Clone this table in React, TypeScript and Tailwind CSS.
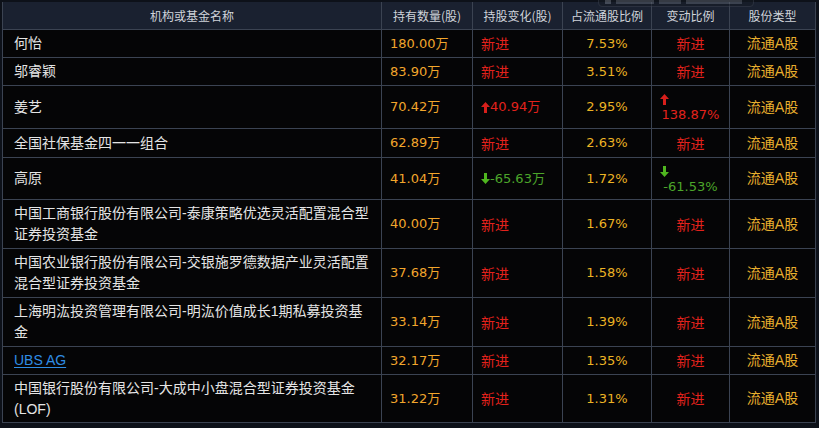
import React from 'react'

type Change = { kind: 'new' } | { kind: 'up'; text: string } | { kind: 'down'; text: string }

interface Holder {
  name: string
  link?: boolean
  amount: string
  change: Change
  ratio: string
  delta: Change
  h: string
}

const holders: Holder[] = [
  { name: '何怡', amount: '180.00万', change: { kind: 'new' }, ratio: '7.53%', delta: { kind: 'new' }, h: 'h-[28px]' },
  { name: '邬睿颖', amount: '83.90万', change: { kind: 'new' }, ratio: '3.51%', delta: { kind: 'new' }, h: 'h-[28px]' },
  { name: '姜艺', amount: '70.42万', change: { kind: 'up', text: '40.94万' }, ratio: '2.95%', delta: { kind: 'up', text: '138.87%' }, h: 'h-[43px]' },
  { name: '全国社保基金四一一组合', amount: '62.89万', change: { kind: 'new' }, ratio: '2.63%', delta: { kind: 'new' }, h: 'h-[29px]' },
  { name: '高原', amount: '41.04万', change: { kind: 'down', text: '-65.63万' }, ratio: '1.72%', delta: { kind: 'down', text: '-61.53%' }, h: 'h-[42px]' },
  { name: '中国工商银行股份有限公司-泰康策略优选灵活配置混合型证券投资基金', amount: '40.00万', change: { kind: 'new' }, ratio: '1.67%', delta: { kind: 'new' }, h: 'h-[49px]' },
  { name: '中国农业银行股份有限公司-交银施罗德数据产业灵活配置混合型证券投资基金', amount: '37.68万', change: { kind: 'new' }, ratio: '1.58%', delta: { kind: 'new' }, h: 'h-[49px]' },
  { name: '上海明汯投资管理有限公司-明汯价值成长1期私募投资基金', amount: '33.14万', change: { kind: 'new' }, ratio: '1.39%', delta: { kind: 'new' }, h: 'h-[49px]' },
  { name: 'UBS AG', link: true, amount: '32.17万', change: { kind: 'new' }, ratio: '1.35%', delta: { kind: 'new' }, h: 'h-[28px]' },
  { name: '中国银行股份有限公司-大成中小盘混合型证券投资基金(LOF)', amount: '31.22万', change: { kind: 'new' }, ratio: '1.31%', delta: { kind: 'new' }, h: 'h-[48px]' },
]

const cjk = "font-['Noto_Sans_CJK_SC',sans-serif]"
const num = "font-['DejaVu_Sans','Noto_Sans_CJK_SC',sans-serif]"

function Arrow({ up }: { up: boolean }) {
  return (
    <svg width="9" height="11" viewBox="0 0 9 11" className="shrink-0">
      {up ? (
        <polygon points="4.5,0 9,5 6,5 6,11 3,11 3,5 0,5" fill="#d71f1b" />
      ) : (
        <polygon points="4.5,11 9,6 6,6 6,0 3,0 3,6 0,6" fill="#4fb61f" />
      )}
    </svg>
  )
}

function NewTag() {
  return <span className={`${cjk} text-[14px] text-[#e3221c]`}>新进</span>
}

function ChangeCell({ c }: { c: Change }) {
  if (c.kind === 'new') return <NewTag />
  return (
    <span className="flex items-center">
      <Arrow up={c.kind === 'up'} />
      <span
        className={`${num} text-[13px] ${c.kind === 'up' ? 'text-[#e3221c]' : 'text-[#4ca52a]'}`}
      >
        {c.text}
      </span>
    </span>
  )
}

function DeltaCell({ c }: { c: Change }) {
  if (c.kind === 'new') return <NewTag />
  return (
    <div className="flex w-full flex-col">
      <div className="pl-[8px] leading-[16px]">
        <span className="inline-block align-middle">
          <Arrow up={c.kind === 'up'} />
        </span>
      </div>
      <div
        className={`${num} text-center text-[13px] leading-[18px] ${c.kind === 'up' ? 'text-[#e3221c]' : 'text-[#4ca52a]'}`}
      >
        {c.text}
      </div>
    </div>
  )
}

const headers = [
  { label: '机构或基金名称', w: 'w-[379px]' },
  { label: '持有数量(股)', w: 'w-[91px]' },
  { label: '持股变化(股)', w: 'w-[90px]' },
  { label: '占流通股比例', w: 'w-[89px]' },
  { label: '变动比例', w: 'w-[78px]' },
  { label: '股份类型', w: 'w-[86px]' },
]

export default function App() {
  return (
    <div className="relative h-[428px] w-[819px] overflow-hidden bg-[#0d1119] pt-[2px]">
      {/* faint remains of a tooltip sticking out above the header */}
      <div className="absolute -top-[10px] left-[598px] flex h-[17px] w-[156px] items-end gap-[5px] rounded-sm border border-[#3a404c] bg-[#161b24] px-[6px] pb-[2px] opacity-50">
        <div className="h-[4px] w-[6px] bg-[#6f7580]" />
        <div className="h-[4px] w-[38px] bg-[#5d636e]" />
        <div className="h-[4px] w-[22px] bg-[#5d636e]" />
        <div className="h-[4px] w-[56px] bg-[#5d636e]" />
      </div>

      <div className="ml-[2px] w-[814px] border-l border-[#3b4352]">
        <div className="flex h-[28px] border-b border-[#3b4352] bg-[#1a2130]">
          {headers.map((h) => (
            <div
              key={h.label}
              className={`${h.w} ${cjk} flex shrink-0 items-center justify-center border-r border-[#3b4352] text-[12px] text-[#cfd3da]`}
            >
              {h.label}
            </div>
          ))}
        </div>

        {holders.map((r) => (
          <div key={r.name} className={`flex ${r.h} border-b border-[#3b4352] bg-[#050506]`}>
            <div className="flex w-[379px] shrink-0 items-center border-r border-[#3b4352] pl-[11px] pr-[9px]">
              {r.link ? (
                <span className="font-['Liberation_Sans',sans-serif] text-[14px] text-[#2f8de4] underline underline-offset-2">
                  {r.name}
                </span>
              ) : (
                <span className="font-['Liberation_Sans','Noto_Sans_CJK_SC',sans-serif] text-[14px] leading-[21px] text-[#e4e4e4]">
                  {r.name}
                </span>
              )}
            </div>
            <div className="flex w-[91px] shrink-0 items-center border-r border-[#3b4352] pl-[8px]">
              <span className={`${num} text-[13px] text-[#f2a62c]`}>{r.amount}</span>
            </div>
            <div className="flex w-[90px] shrink-0 items-center border-r border-[#3b4352] pl-[8px]">
              <ChangeCell c={r.change} />
            </div>
            <div className="flex w-[89px] shrink-0 items-center justify-center border-r border-[#3b4352]">
              <span className={`${num} text-[13px] text-[#ecb324]`}>{r.ratio}</span>
            </div>
            <div className="flex w-[78px] shrink-0 items-center justify-center border-r border-[#3b4352]">
              <DeltaCell c={r.delta} />
            </div>
            <div className="flex w-[86px] shrink-0 items-center justify-center border-r border-[#3b4352]">
              <span className={`${num} text-[14px] text-[#eab02e]`}>流通A股</span>
            </div>
          </div>
        ))}
      </div>
    </div>
  )
}
